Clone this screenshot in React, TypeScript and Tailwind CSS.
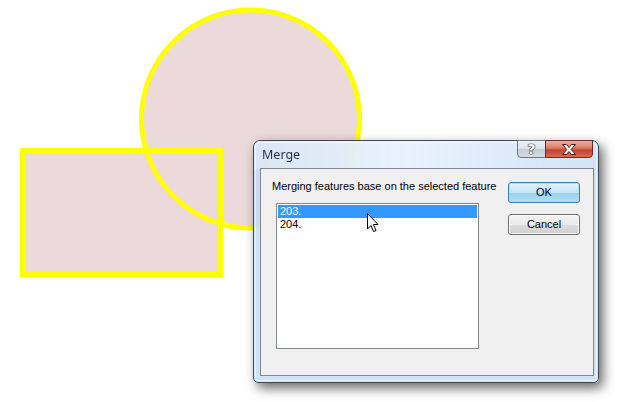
import React from "react";

export default function App() {
  return (
    <div className="relative w-[620px] h-[402px] overflow-hidden bg-white">
      <svg className="absolute left-0 top-0" width="620" height="402">
        <rect x="22.5" y="150.5" width="198" height="124" fill="#ecd9d9" />
        <circle cx="250.5" cy="119" r="109" fill="#ecd9d9" />
        <rect x="22.5" y="150.5" width="198" height="124" fill="none" stroke="#ffff00" strokeWidth="5" />
        <circle cx="250.5" cy="119" r="109" fill="none" stroke="#ffff00" strokeWidth="5" />
      </svg>

      {/* Window */}
      <div className="absolute left-[253px] top-[140px] w-[346px] h-[243px] rounded-t-[7px] rounded-b-[5px] border border-[#3f4a5a] bg-[rgba(196,220,246,0.82)] backdrop-blur-[4px] shadow-[4px_5px_12px_rgba(0,0,0,0.6)] flex flex-col">
        <div className="absolute left-0 right-0 top-0 h-[28px] rounded-t-[6px] bg-[linear-gradient(90deg,rgba(255,255,255,0.3)_0%,rgba(255,255,255,0.55)_45%,rgba(255,255,255,0.05)_100%)] pointer-events-none" />
        <div className="absolute inset-[1px] rounded-t-[5px] rounded-b-[3px] border border-[rgba(255,255,255,0.6)] pointer-events-none" />
        {/* Title bar */}
        <div className="relative h-[27px] flex items-start shrink-0">
          <span className="ml-[8px] mt-[6px] text-[12.5px] leading-[15px] text-[#1e2f4a] font-['Noto_Sans',sans-serif]">Merge</span>
          <div className="ml-auto mr-[5px] mt-[-1px] flex">
            <div className="w-[29px] h-[18px] rounded-bl-[4px] border border-[#6b7788] bg-[linear-gradient(180deg,#eef2f6_0%,#dae1ea_50%,#c3ccd8_52%,#d3dbe5_100%)] flex items-center justify-center">
              <span className="text-[14px] font-bold leading-none text-white font-['DejaVu_Sans',sans-serif] [text-shadow:0_0_1px_#333,0_0_1px_#333,0_0_1px_#333,0_0_1px_#333]">?</span>
            </div>
            <div className="w-[48px] h-[18px] -ml-px rounded-br-[4px] border border-[#6e2a22] bg-[linear-gradient(180deg,#eab0a4_0%,#d97a65_45%,#c4432b_55%,#d56b55_100%)] flex items-center justify-center">
              <svg width="16" height="13" viewBox="0 0 16 13">
                <path d="M1.5 1.5 H5.5 L8 4.5 L10.5 1.5 H14.5 L10.2 6.5 L14.5 11.5 H10.5 L8 8.5 L5.5 11.5 H1.5 L5.8 6.5 Z" fill="#ffffff" stroke="#4a1c16" strokeWidth="1" strokeLinejoin="round" />
              </svg>
            </div>
          </div>
        </div>
        {/* Client area */}
        <div className="relative ml-[6px] mr-[4px] mb-[6px] flex-1 border border-[#7d8694] bg-[#f0f0f0] flex font-['Liberation_Sans',Arial,sans-serif] text-[11px] text-black">
          <div className="w-[247px] pl-[11px] pt-[11px] flex flex-col">
            <div className="leading-[13px] whitespace-nowrap">Merging features base on the selected feature</div>
            <div className="ml-[4px] mt-[10px] w-[203px] h-[146px] border border-[#828790] bg-white p-px">
              <div className="h-[13px] leading-[13px] bg-[#3399ff] text-white pl-[2px]">203.</div>
              <div className="h-[13px] leading-[13px] pl-[2px]">204.</div>
            </div>
          </div>
          <div className="pt-[13px] flex flex-col gap-[11px]">
            <button className="w-[72px] h-[21px] rounded-[3px] border border-[#3c7fb1] bg-[linear-gradient(180deg,#e5f4fc_0%,#c4e5f6_50%,#98d1ef_52%,#b6def3_100%)] shadow-[inset_0_0_0_1px_rgba(160,220,250,0.9)] leading-[19px] text-center">OK</button>
            <button className="w-[72px] h-[21px] rounded-[3px] border border-[#707070] bg-[linear-gradient(180deg,#f2f2f2_0%,#ebebeb_50%,#dddddd_52%,#cfcfcf_100%)] shadow-[inset_0_0_0_1px_rgba(255,255,255,0.8)] leading-[19px] text-center">Cancel</button>
          </div>
        </div>
      </div>

      {/* Cursor */}
      <svg className="absolute left-[366px] top-[212px]" width="14" height="22" viewBox="0 0 14 22">
        <path d="M1.5 1.5 L1.5 17 L5 13.5 L7.5 19.5 L10 18.5 L7.5 12.5 L12 12.5 Z" fill="#ffffff" stroke="#000000" strokeWidth="1" strokeLinejoin="miter" />
      </svg>
    </div>
  );
}
